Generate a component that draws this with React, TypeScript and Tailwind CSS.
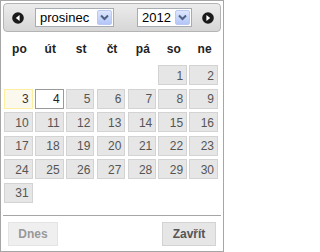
import React from "react";

const dayNames = ["po", "út", "st", "čt", "pá", "so", "ne"];

// prosinec 2012 starts on saturday
const cells: (number | null)[] = [
  ...Array(5).fill(null),
  ...Array.from({ length: 31 }, (_, i) => i + 1),
];
while (cells.length < 42) cells.push(null);

const Arrow = ({ dir }: { dir: "left" | "right" }) => (
  <svg width="12" height="12" viewBox="0 0 12 12">
    <circle cx="6" cy="6" r="5.8" fill="#1a1a1a" />
    {dir === "left" ? (
      <path d="M7.6 3 L3.8 6 L7.6 9 Z" fill="#fff" />
    ) : (
      <path d="M4.4 3 L8.2 6 L4.4 9 Z" fill="#fff" />
    )}
  </svg>
);

const Select = ({ value, width }: { value: string; width: string }) => (
  <div
    className={`flex h-[19px] items-center border border-[#a5acb2] bg-white pl-[4px] ${width}`}
  >
    <span className="flex-1 text-[13px] leading-none text-black">{value}</span>
    <div className="m-px flex h-[15px] w-[15px] items-center justify-center rounded-[2px] border border-[#b9c9f0] bg-gradient-to-b from-[#dde6fd] to-[#b3c6f7]">
      <svg width="9" height="7" viewBox="0 0 9 7">
        <path d="M1 1.5 L4.5 5 L8 1.5" fill="none" stroke="#4d6185" strokeWidth="2" />
      </svg>
    </div>
  </div>
);

export default function App() {
  return (
    <div
      className="flex h-[252px] w-[224px] flex-col border border-[#a6a6a6] bg-white p-[2px]"
      style={{ fontFamily: '"Liberation Sans", Arial, sans-serif' }}
    >
      <div className="flex h-[29px] items-center rounded-[4px] border border-[#b4b4b4] bg-gradient-to-b from-[#ececec] to-[#d6d6d6] pl-[8px] pr-[6px]">
        <Arrow dir="left" />
        <div className="ml-[11px]">
          <Select value="prosinec" width="w-[79px]" />
        </div>
        <div className="ml-[23px]">
          <Select value="2012" width="w-[55px]" />
        </div>
        <div className="ml-auto">
          <Arrow dir="right" />
        </div>
      </div>

      <div className="mt-[4px] grid h-[26px] grid-cols-7 items-center px-[1px]">
        {dayNames.map((d) => (
          <span key={d} className="text-center text-[12px] font-bold text-[#222]">
            {d}
          </span>
        ))}
      </div>

      <div className="mt-[3px] grid w-[216px] grid-cols-7 auto-rows-[20px] gap-x-[2.17px] gap-y-[3.6px] px-[1px]">
        {cells.map((n, i) => {
          if (n === null) return <div key={i} />;
          let cls = "border-[#d3d3d3] bg-[#e6e6e6] text-[#555]";
          if (n === 3) cls = "border-[#fcefa1] bg-[#fbf9ee] text-[#363636]";
          if (n === 4) cls = "border-[#999] bg-white text-[#212121]";
          return (
            <div
              key={i}
              className={`flex items-center justify-end border pr-[3px] pt-[1px] text-[12px] ${cls}`}
            >
              {n}
            </div>
          );
        })}
      </div>

      <div className="mt-[12px] flex items-center justify-between border-t border-[#a6a6a6] px-[5px] pt-[6px]">
        <button className="h-[24px] w-[50px] border border-[#d3d3d3] bg-[#e6e6e6] text-[12px] font-bold text-[#555] opacity-60">
          Dnes
        </button>
        <button className="h-[24px] w-[54px] border border-[#d3d3d3] bg-[#e6e6e6] text-[12px] font-bold text-[#555]">
          Zavřít
        </button>
      </div>
    </div>
  );
}
